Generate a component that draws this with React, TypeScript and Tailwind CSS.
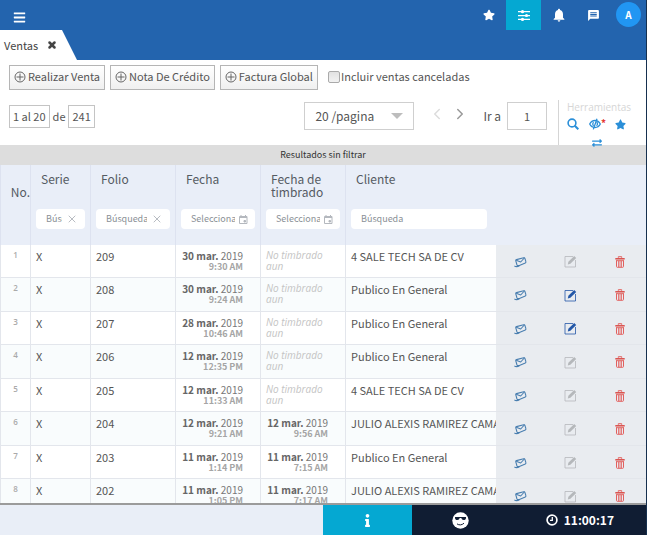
import { useState } from "react";
import type { ReactNode } from "react";
import { FaBars, FaExchangeAlt, FaInfo, FaStar } from "react-icons/fa";
import { MdMessage, MdNotifications } from "react-icons/md";
import { ChevronLeft, ChevronRight, X } from "lucide-react";
import clsx from "clsx";

interface Sale {
  no: number;
  folio: string;
  date: string;
  time: string;
  stampDate?: string;
  stampTime?: string;
  client: string;
  editable?: boolean;
}

const sales: Sale[] = [
  { no: 1, folio: "209", date: "30 mar.", time: "9:30 AM", client: "4 SALE TECH SA DE CV" },
  { no: 2, folio: "208", date: "30 mar.", time: "9:24 AM", client: "Publico En General", editable: true },
  { no: 3, folio: "207", date: "28 mar.", time: "10:46 AM", client: "Publico En General", editable: true },
  { no: 4, folio: "206", date: "12 mar.", time: "12:35 PM", client: "Publico En General" },
  { no: 5, folio: "205", date: "12 mar.", time: "11:33 AM", client: "4 SALE TECH SA DE CV" },
  { no: 6, folio: "204", date: "12 mar.", time: "9:21 AM", stampDate: "12 mar.", stampTime: "9:56 AM", client: "JULIO ALEXIS RAMIREZ CAMA" },
  { no: 7, folio: "203", date: "11 mar.", time: "1:14 PM", stampDate: "11 mar.", stampTime: "7:15 AM", client: "Publico En General" },
  { no: 8, folio: "202", date: "11 mar.", time: "1:05 PM", stampDate: "11 mar.", stampTime: "7:17 AM", client: "JULIO ALEXIS RAMIREZ CAMA" },
];

function PlusCircle() {
  return (
    <svg width="12" height="12" viewBox="0 0 12 12" fill="none" stroke="#666" strokeWidth="1">
      <circle cx="6" cy="6" r="5" />
      <path d="M6 2.5v7M2.5 6h7" />
    </svg>
  );
}

function SlidersIcon() {
  return (
    <svg width="12" height="11" viewBox="0 0 12 11" fill="#fff">
      <path d="M0 1h12v1.300H0zM0 4.900h12v1.300H0zM0 8.800h12v1.300H0z" />
      <circle cx="4.500" cy="1.700" r="1.600" />
      <circle cx="8.500" cy="5.500" r="1.600" />
      <circle cx="4.500" cy="9.400" r="1.600" />
    </svg>
  );
}

function SearchIcon() {
  return (
    <svg width="12" height="12" viewBox="0 0 12 12" fill="none" stroke="currentColor" strokeWidth="1.6">
      <circle cx="5" cy="5" r="3.9" />
      <path d="M7.800 7.800l3.500 3.500" strokeWidth="2" />
    </svg>
  );
}

function EyeSlashIcon() {
  return (
    <svg width="12" height="12" viewBox="0 0 12 12" fill="none" stroke="currentColor" strokeWidth="1.3">
      <path d="M.7 6C1.900 3.600 3.800 2.500 6 2.500S10.100 3.600 11.300 6C10.100 8.400 8.200 9.500 6 9.500S1.900 8.400.7 6z" />
      <path d="M4.600 4.200a2.400 2.400 0 0 0 0 3.600M8 .8L4.300 11.400M7.800 4.200a2.400 2.400 0 0 1-.3 3.600" />
    </svg>
  );
}

function EnvelopeIcon() {
  return (
    <svg width="13" height="12" viewBox="0 0 13 12" fill="none" stroke="#4a7fb0" strokeWidth="1.1" strokeLinejoin="round">
      <path d="M1.800 4.900C1.600 4.300 1.900 3.800 2.500 3.600L9.600 1.700c.6-.2 1.100.1 1.300.7l1 3.300c.2.600-.1 1-.6 1.300L5.400 9.400c-.6.200-2.100.3-2.400-.4z" />
      <path d="M2.200 4.300l4.500 1.700 3.600-4" />
      <path d="M.4 10c1.500.9 3.400.7 5.200-.5" />
    </svg>
  );
}

function EditIcon({ active }: { active?: boolean }) {
  return (
    <svg width="13" height="13" viewBox="0 0 13 13" fill="none" className={active ? "text-[#2458a8]" : "text-[#b5b8bb]"}>
      <path d="M9 1.500H1v10.500h10.500V5" stroke="currentColor" strokeWidth="1" opacity="0.8" />
      <path d="M3.800 9.500l.6-2.700L10.200 1l2 2-5.800 5.800z" fill="currentColor" />
    </svg>
  );
}

function TrashIcon() {
  return (
    <svg width="10" height="12" viewBox="0 0 10 12" fill="none" stroke="#e2605e">
      <path d="M3.300 1.800V.7h3.400v1.100" />
      <path d="M.3 2.800h9.400" strokeWidth="1.400" stroke="#d8453f" />
      <path d="M1 4.700h8M1.500 4.700v5.800c0 .5.300.8.8.8h5.400c.5 0 .8-.3.800-.8V4.700" />
      <path d="M3.500 5v6M5 5v6M6.500 5v6" strokeWidth=".8" />
    </svg>
  );
}

function CalendarIcon() {
  return (
    <svg width="9" height="9" viewBox="0 0 9 9" fill="none" stroke="#b4b8be">
      <path d="M.5 1.500h7.500v7H.500zM.5 2.500H8M2 0v1.500M6.500 0v1.500" />
      <path d="M5 5.500h1.500V7H5z" fill="#b4b8be" />
    </svg>
  );
}

function CoolFaceIcon() {
  return (
    <svg width="17" height="17" viewBox="0 0 17 17">
      <circle cx="8.500" cy="8.500" r="8.200" fill="#fff" />
      <path d="M3 5h11v1c-.2 1.400-.9 2-2.300 2-1.400 0-2-.8-2.400-2H7.700C7.300 7.200 6.700 8 5.300 8 3.900 8 3.200 7.400 3 6z" fill="#101d33" />
      <path d="M5 11.900c2.200 1.500 4.900 1.300 7-.7" fill="none" stroke="#101d33" strokeWidth="1" />
    </svg>
  );
}

function ClockIcon() {
  return (
    <svg width="12" height="12" viewBox="0 0 12 12" fill="none" stroke="#fff" strokeWidth="1.700">
      <circle cx="6" cy="6" r="4.900" />
      <path d="M6.300 3v3.400H4" strokeWidth="1.300" />
    </svg>
  );
}

function ToolbarButton({ children }: { children: ReactNode }) {
  return (
    <button className="flex h-[25px] items-center gap-0.5 border border-[#b5b5b5] bg-linear-to-b from-white to-[#f0f0f0] px-1 pb-0.5 text-[11px] whitespace-nowrap">
      <PlusCircle />
      {children}
    </button>
  );
}

interface HeaderCellProps {
  title: string;
  type?: "text" | "date" | "plain";
}

function HeaderCell({ title, type = "text" }: HeaderCellProps) {
  return (
    <th className="border-l border-[#dde2f0] pt-[7px] pr-[5px] pb-4 pl-[5px] text-left align-top font-normal">
      <div className="h-[37px] pl-[5px] text-[12px] leading-[13px] text-[#555b63]">{title}</div>
      <div className={clsx("flex h-5 items-center gap-1 rounded-sm bg-white pl-2.5", type === "plain" ? "mr-1 pr-2" : "pr-[7px]")}>
        <input
          aria-label={title}
          placeholder={type === "date" ? "Seleccionar" : "Búsqueda"}
          className="w-full min-w-0 flex-1 bg-transparent text-[9px] outline-none placeholder:text-[#8a8f96]"
        />
        {type === "text" && (
          <button aria-label={`Limpiar ${title}`} className="shrink-0 text-[#b8bcc2]">
            <X size={12} strokeWidth={2} />
          </button>
        )}
        {type === "date" && (
          <button aria-label={`Calendario ${title}`} className="shrink-0">
            <CalendarIcon />
          </button>
        )}
      </div>
    </th>
  );
}

function DateCell({ date, time }: { date?: string; time?: string }) {
  return (
    <td className="border-b border-l border-[#e3e6ec] pt-[5px] pr-[17px] align-top leading-[11px] whitespace-nowrap">
      <div className="text-right text-[10px] text-[#777]">
        <b className="text-[#666]">{date}</b> 2019
      </div>
      <div className="text-right text-[9px] font-bold text-[#a5a5a5]">{time}</div>
    </td>
  );
}

function SaleRow({ sale }: { sale: Sale }) {
  const cell = "overflow-hidden border-l border-b border-[#e3e6ec] pt-[5px] pl-[5px] align-top text-[11px] leading-[13px] whitespace-nowrap";
  const action = "border-b border-[#e3e6eb] bg-[#e9ecf0] pr-0.5 pb-1 text-center align-middle";
  return (
    <tr className="odd:h-[33px] even:h-[34px] odd:bg-white even:bg-[#f9fcfd]">
      <td className="border-b border-l border-[#e3e6ec] pt-1 text-center align-top font-['Open_Sans'] text-[8px] leading-[11px] font-semibold text-[#aaa]">{sale.no}</td>
      <td className={cell}>X</td>
      <td className={cell}>{sale.folio}</td>
      <DateCell date={sale.date} time={sale.time} />
      {sale.stampDate ? (
        <DateCell date={sale.stampDate} time={sale.stampTime} />
      ) : (
        <td className="border-b border-l border-[#e3e6ec] pt-[5px] pr-4 pl-[5px] align-top font-['Open_Sans'] text-[10px] leading-[11px] text-[#c4c4c4] italic">
          No timbrado aun
        </td>
      )}
      <td className={cell}>{sale.client}</td>
      <td className={action}>
        <button aria-label="Enviar" className="align-middle"><EnvelopeIcon /></button>
      </td>
      <td className={action}>
        <button aria-label="Editar" disabled={!sale.editable} className="align-middle"><EditIcon active={sale.editable} /></button>
      </td>
      <td className={action}>
        <button aria-label="Eliminar" className="align-middle"><TrashIcon /></button>
      </td>
    </tr>
  );
}

function Header() {
  return (
    <header className="shrink-0 bg-[#2364ae] text-white">
      <div className="flex h-[30px] items-center">
        <button aria-label="Menú" className="ml-[13px] pt-1">
          <FaBars size={13} />
        </button>
        <div className="ml-auto flex h-full">
          <button aria-label="Favoritos" className="flex w-[35px] items-center justify-center"><FaStar size={12} /></button>
          <button aria-label="Opciones" className="flex w-[35px] items-center justify-center bg-[#05a8d2]"><SlidersIcon /></button>
          <button aria-label="Notificaciones" className="flex w-[35px] items-center justify-center"><MdNotifications size={16} /></button>
          <button aria-label="Mensajes" className="flex w-[35px] items-center justify-center"><MdMessage size={13} /></button>
          <button className="mx-[5px] mt-[2px] size-[25px] rounded-full bg-[#2196f3] text-[10px] leading-[25px] font-bold">A</button>
        </div>
      </div>
      <div className="flex h-[30px]">
        <div className="flex w-[77px] items-center gap-[9px] bg-white pl-1 text-[11px] text-[#444] [clip-path:polygon(0_0,62px_0,100%_100%,0_100%)]">
          <span>Ventas</span>
          <button aria-label="Cerrar Ventas"><X size={10} strokeWidth={6} /></button>
        </div>
      </div>
    </header>
  );
}

function Pagination() {
  const [page, setPage] = useState("1");
  return (
    <div className="flex h-[45px] items-start pl-[9px]">
      <div className="mt-[5px] flex h-[23px] items-center gap-[3px] text-[11px]">
        <span className="flex h-full items-center border border-[#c4c4c4] px-[3px]">1 al 20</span>
        <span>de</span>
        <span className="flex h-full items-center border border-[#c4c4c4] px-[3px]">241</span>
      </div>
      <div className="ml-auto flex h-[28px] items-center">
        <div className="relative mt-1 h-[28px] w-[110px]">
          <select aria-label="Resultados por página" className="size-full appearance-none rounded-none border border-[#cfcfcf] bg-white pl-[10px] text-[12px] outline-none">
            <option>20 /pagina</option>
            <option>50 /pagina</option>
          </select>
          <svg width="12" height="6" viewBox="0 0 12 6" className="pointer-events-none absolute top-[11px] right-[11px]" fill="#bdbdbd">
            <path d="M0 0h12L6 6z" />
          </svg>
        </div>
        <button aria-label="Anterior" disabled className="ml-[14px] text-[#dcdcdc]"><ChevronLeft size={18} /></button>
        <button aria-label="Siguiente" className="ml-[5px] text-[#999]"><ChevronRight size={18} /></button>
        <label htmlFor="page" className="mt-1 ml-[14px] text-[12px]">Ir a</label>
        <input
          id="page"
          value={page}
          onChange={(e) => setPage(e.target.value)}
          className="mt-1 ml-1.5 h-[28px] w-10 border border-[#cfcfcf] text-center text-[11px] outline-none"
        />
      </div>
      <div className="relative z-10 ml-[11px] h-[45px] w-[88px] border-l border-[#d5d5d5] px-2 text-[#2b8fd8]">
        <div className="font-['Open_Sans'] text-[10px] leading-[14px] text-[#d6d6d6]">Herramientas</div>
        <div className="flex flex-wrap items-center gap-y-2 pt-1">
          <button aria-label="Buscar" className="w-[22px]"><SearchIcon /></button>
          <button aria-label="Ocultar columnas" className="flex w-[26px]">
            <EyeSlashIcon />
            <span className="text-[10px] leading-[10px] font-bold text-[#e53935]">*</span>
          </button>
          <button aria-label="Guardar filtro"><FaStar size={11} /></button>
          <button aria-label="Recargar" className="flex w-[60px] justify-center"><FaExchangeAlt size={10} /></button>
        </div>
      </div>
    </div>
  );
}

export default function App() {
  return (
    <div className="flex h-screen flex-col overflow-hidden border-r border-[#16304f] bg-white font-['Noto_Sans_CJK_SC',sans-serif] text-[#555]">
      <Header />
      <div className="flex h-10 shrink-0 items-start pt-[5px] pl-[9px]">
        <div className="flex gap-[5px]">
          <ToolbarButton>Realizar Venta</ToolbarButton>
          <ToolbarButton>Nota De Crédito</ToolbarButton>
          <ToolbarButton>Factura Global</ToolbarButton>
        </div>
        <label className="ml-[10px] flex h-[25px] items-center gap-px pb-0.5 text-[11px] whitespace-nowrap">
          <input type="checkbox" className="size-3 appearance-none rounded-xs border border-[#aaa] bg-linear-to-b from-[#e2e2e2] to-[#f2f2f2]" />
          Incluir ventas canceladas
        </label>
      </div>
      <Pagination />
      <div className="h-5 shrink-0 bg-[#dddddd] text-center text-[9px] leading-[19px] text-[#333]">Resultados sin filtrar</div>
      <main className="min-h-0 flex-1 overflow-hidden border-b-2 border-[#9b9b9b]">
        <table className="w-full table-fixed border-separate border-spacing-0">
          <colgroup>
            <col className="w-[30px]" />
            <col className="w-[60px]" />
            <col className="w-[85px]" />
            <col className="w-[85px]" />
            <col className="w-[85px]" />
            <col />
            <col className="w-[50px]" />
            <col className="w-[50px]" />
            <col className="w-[50px]" />
          </colgroup>
          <thead className="bg-[#e9eef8]">
            <tr>
              <th className="border-l border-[#dde2f0] pt-5 text-right align-top text-[12px] leading-[13px] font-normal text-[#555b63]">No.</th>
              <HeaderCell title="Serie" />
              <HeaderCell title="Folio" />
              <HeaderCell title="Fecha" type="date" />
              <HeaderCell title="Fecha de timbrado" type="date" />
              <HeaderCell title="Cliente" type="plain" />
              <th colSpan={3} />
            </tr>
          </thead>
          <tbody>
            {sales.map((sale) => (
              <SaleRow key={sale.no} sale={sale} />
            ))}
          </tbody>
        </table>
      </main>
      <footer className="flex h-[30px] shrink-0 bg-[#101d33] text-white">
        <div className="w-1/2 bg-[#e9eef7]" />
        <button aria-label="Información" className="flex w-[89px] items-center justify-center bg-[#05a8d2]"><FaInfo size={13} /></button>
        <div className="flex flex-1 items-center">
          <button aria-label="Estado" className="ml-10"><CoolFaceIcon /></button>
          <div className="mr-8 ml-auto flex items-center gap-1.5 text-[12px] font-bold">
            <ClockIcon />
            <time>11:00:17</time>
          </div>
        </div>
      </footer>
    </div>
  );
}
